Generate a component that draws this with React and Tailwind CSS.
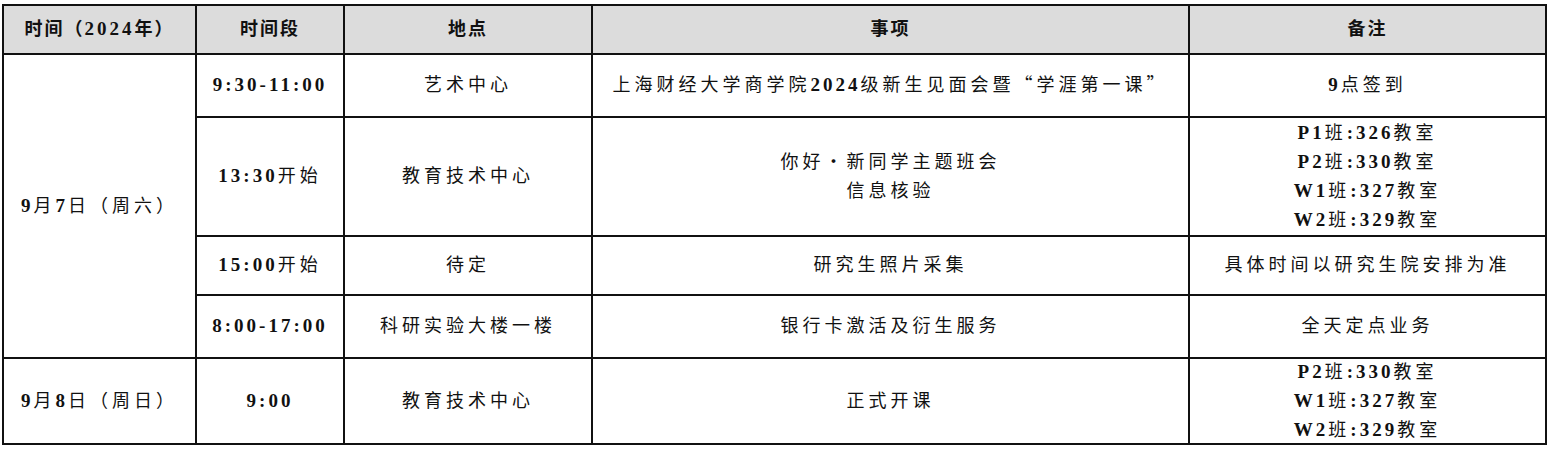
import React from "react";

// 新生入学日程表
const rows = [
  {
    date: "9月7日（周六）",
    span: 4,
    time: "9:30-11:00",
    place: "艺术中心",
    item: ["上海财经大学商学院2024级新生见面会暨“学涯第一课”"],
    note: ["9点签到"],
    h: "h-[63px]",
  },
  {
    time: "13:30开始",
    place: "教育技术中心",
    item: ["你好・新同学主题班会", "信息核验"],
    note: ["P1班:326教室", "P2班:330教室", "W1班:327教室", "W2班:329教室"],
    h: "h-[119px]",
  },
  {
    time: "15:00开始",
    place: "待定",
    item: ["研究生照片采集"],
    note: ["具体时间以研究生院安排为准"],
    h: "h-[59px]",
  },
  {
    time: "8:00-17:00",
    place: "科研实验大楼一楼",
    item: ["银行卡激活及衍生服务"],
    note: ["全天定点业务"],
    h: "h-[63px]",
  },
  {
    date: "9月8日（周日）",
    span: 1,
    time: "9:00",
    place: "教育技术中心",
    item: ["正式开课"],
    note: ["P2班:330教室", "W1班:327教室", "W2班:329教室"],
    h: "h-[86px]",
    tight: true,
  },
];

const cell = "border-2 border-[#111] p-0 text-center align-middle";

// 拉丁字符加粗，引号用中文字体
const Txt = ({ s }) => {
  const parts = s.split(/([A-Za-z0-9:\-]+|[“”])/).filter(Boolean);
  return (
    <>
      {parts.map((p, i) =>
        /^[A-Za-z0-9:\-]+$/.test(p) ? (
          <span key={i} className="font-bold text-[19px] leading-none tracking-[3px]">
            {p}
          </span>
        ) : /^[“”]$/.test(p) ? (
          <span key={i} className="font-['Noto_Sans_CJK_SC'] leading-none">
            {p}
          </span>
        ) : (
          <span key={i}>{p}</span>
        )
      )}
    </>
  );
};

const Lines = ({ lines, tight }) => (
  <div
    className={
      "flex flex-col items-center justify-center " +
      (tight ? "h-[80px]" : "")
    }
  >
    {lines.map((l) => (
      <span key={l} className="block h-[29px] leading-[29px] whitespace-nowrap">
        <Txt s={l} />
      </span>
    ))}
  </div>
);

export default function App() {
  return (
    <div
      className="w-[1554px] h-[451px] bg-white pt-[4px] pl-[2px] text-[#111] overflow-hidden"
      style={{ fontFamily: '"Liberation Serif", "Noto Sans CJK SC", serif' }}
    >
      <table className="table-fixed border-collapse w-[1545px] text-[18px] leading-[27px] tracking-[4px]">
        <colgroup>
          <col className="w-[193px]" />
          <col className="w-[148px]" />
          <col className="w-[248px]" />
          <col className="w-[597px]" />
          <col className="w-[357px]" />
        </colgroup>
        <thead>
          <tr className="h-[49px] bg-[#dcdcdc] font-bold tracking-[2px]">
            <th className={cell}>
              <Txt s="时间（2024年）" />
            </th>
            <th className={cell}>时间段</th>
            <th className={cell}>地点</th>
            <th className={cell}>事项</th>
            <th className={cell}>备注</th>
          </tr>
        </thead>
        <tbody>
          {rows.map((r, i) => (
            <tr key={i} className={r.h}>
              {r.date && (
                <td rowSpan={r.span} className={cell}>
                  <Txt s={r.date} />
                </td>
              )}
              <td className={cell}>
                <Txt s={r.time} />
              </td>
              <td className={cell}>{r.place}</td>
              <td className={cell}>
                <Lines lines={r.item} />
              </td>
              <td className={cell}>
                <Lines lines={r.note} tight={r.tight} />
              </td>
            </tr>
          ))}
        </tbody>
      </table>
    </div>
  );
}
